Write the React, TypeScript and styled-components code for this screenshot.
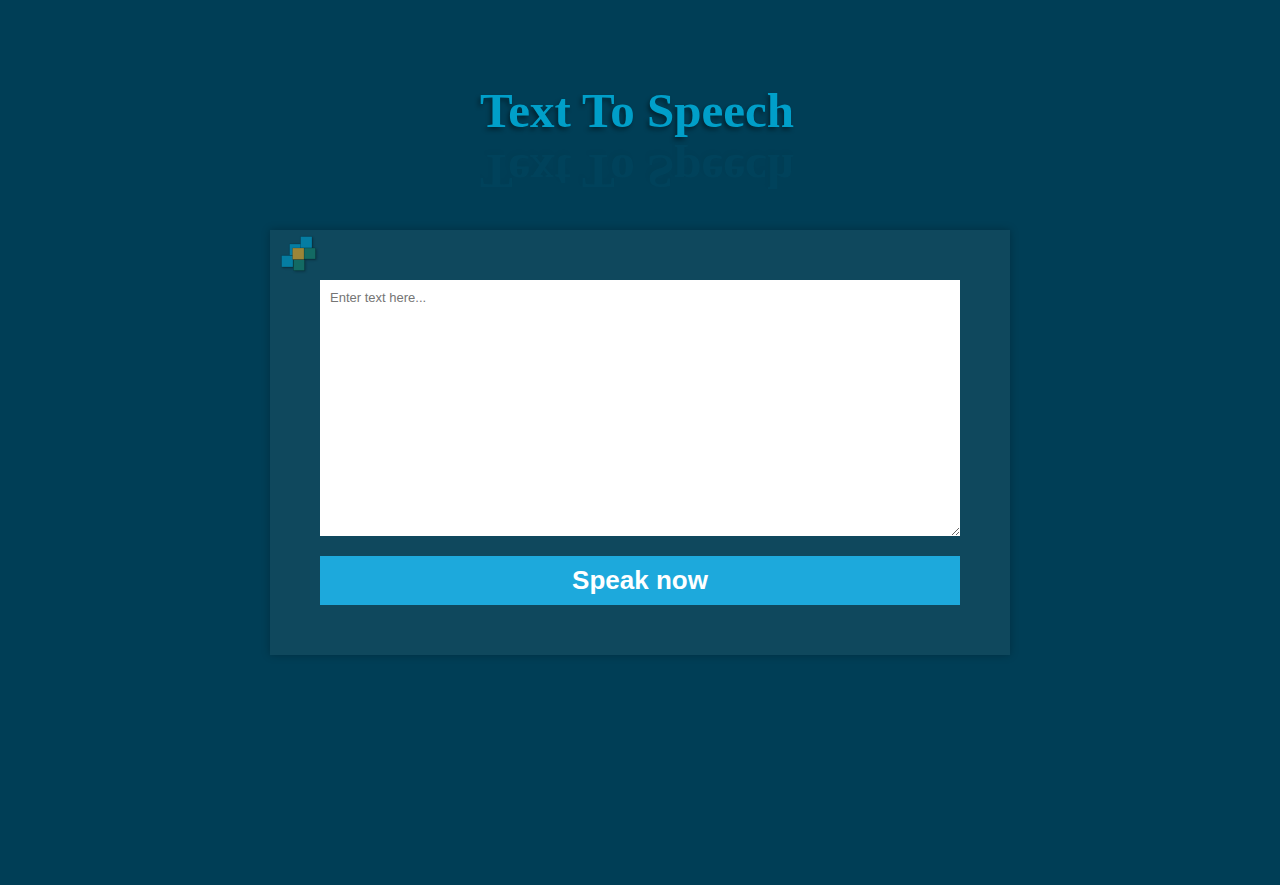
import React, { useState } from "react";
import styled, { createGlobalStyle } from "styled-components";

const GlobalStyle = createGlobalStyle`
  * { box-sizing: border-box; }
  body {
    margin: 0;
    background: #003e56;
    font-family: "Liberation Sans", Arial, sans-serif;
  }
`;

const Page = styled.main`
  display: flex;
  flex-direction: column;
  align-items: center;
  padding: 81px 20px 40px;
`;

const Title = styled.h1`
  margin: 0 0 89px;
  padding-right: 6px;
  color: #009fc9;
  font: 700 49px/60px "Old English Text MT", "Liberation Serif", serif;
  text-shadow: -2px 3px 4px rgba(0, 0, 0, 0.4);
  -webkit-box-reflect: below 0 linear-gradient(rgba(0, 0, 0, 0.05), rgba(0, 0, 0, 0.05));
`;

const Card = styled.form`
  position: relative;
  display: flex;
  flex-direction: column;
  gap: 20px;
  width: 100%;
  max-width: 740px;
  padding: 50px;
  background: #0f485d;
  box-shadow: 0 0 8px rgba(0, 0, 0, 0.25);
`;

const Mark = styled.svg`
  position: absolute;
  top: 4px;
  left: 8px;
  filter: drop-shadow(1px 1px 1px rgba(0, 0, 0, 0.3));
`;

const TextInput = styled.textarea`
  display: block;
  width: 100%;
  height: 256px;
  padding: 10px;
  border: 0;
  outline: 0;
  background: #fff;
  font: 13px/15px "Liberation Sans", Arial, sans-serif;
  resize: both;
`;

const SpeakButton = styled.button`
  padding: 9px 10px 10px;
  border: 0;
  background: #1da9dc;
  color: #fff;
  font: 700 26px/30px "Liberation Sans", Arial, sans-serif;
  cursor: pointer;
`;

export default function App() {
  const [text, setText] = useState("");

  const speak = (event: React.FormEvent) => {
    event.preventDefault();
    if (text && "speechSynthesis" in window) {
      window.speechSynthesis.speak(new SpeechSynthesisUtterance(text));
    }
  };

  return (
    <>
      <GlobalStyle />
      <Page>
        <Title>Text To Speech</Title>
        <Card onSubmit={speak}>
          <Mark width="42" height="40" viewBox="0 0 42 40" aria-hidden="true">
            <g stroke="#000" strokeOpacity="0.15">
              <path fill="#057da2" d="M11.5 10h11.5v11.5h-11.5z" />
              <path fill="#057da2" d="M22.5 2.5h11.5v11.5h-11.5z" />
              <path fill="#057da2" d="M3.5 21.5h11.5v11.5h-11.5z" />
              <path fill="#136a63" d="M26 14h11.5v11h-11.5zM15.5 25.5h11v11h-11z" />
              <path fill="#9b8538" d="M14.5 14h11.5v11.5h-11.5z" />
            </g>
          </Mark>
          <TextInput
            aria-label="Text to speak"
            placeholder="Enter text here..."
            value={text}
            onChange={(event) => setText(event.target.value)}
          />
          <SpeakButton type="submit">Speak now</SpeakButton>
        </Card>
      </Page>
    </>
  );
}
